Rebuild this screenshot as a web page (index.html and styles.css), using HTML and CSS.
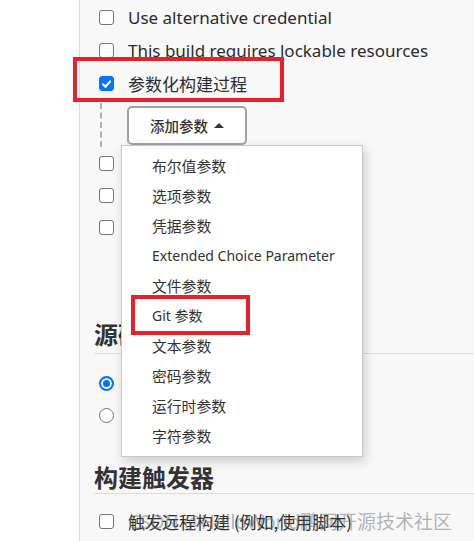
FILE: index.html
```html
<!DOCTYPE html>
<html lang="zh-CN">
<head>
<meta charset="utf-8">
<link rel="stylesheet" href="styles.css">
</head>
<body>
<div class="page">
  <aside class="side"></aside>
  <main class="main">
    <div class="row"><span class="cb"></span><span class="label">Use alternative credential</span></div>
    <div class="row"><span class="cb"></span><span class="label">This build requires lockable resources</span></div>
    <div class="row"><span class="cb checked"><svg viewBox="0 0 14 14" width="14" height="14"><path d="M3.2 7.3 L5.9 10 L10.9 4.2" fill="none" stroke="#fff" stroke-width="2.2" stroke-linecap="round" stroke-linejoin="round"/></svg></span><span class="label cjk">参数化构建过程</span></div>
    <div class="nested">
      <button class="add-btn">添加参数 <span class="caret"></span></button>
    </div>
    <div class="row row-sm"><span class="cb"></span><span class="label cjk">丢弃旧的构建</span></div>
    <div class="row row-sm"><span class="cb"></span><span class="label cjk">在必要的时候并发构建</span></div>
    <div class="row row-sm"><span class="cb"></span><span class="label cjk">限制项目的运行节点</span></div>

    <section class="section sec-scm">
      <h2 class="heading">源码管理</h2>
      <div class="radio-row"><span class="radio checked"></span><span class="label cjk">无</span></div>
      <div class="radio-row"><span class="radio"></span><span class="label">Git</span></div>
    </section>

    <section class="section sec-trig">
      <h2 class="heading">构建触发器</h2>
      <div class="row"><span class="cb"></span><span class="label cjk">触发远程构建 (例如,使用脚本)</span></div>
    </section>

    <ul class="menu">
      <li class="cjk">布尔值参数</li>
      <li class="cjk">选项参数</li>
      <li class="cjk">凭据参数</li>
      <li>Extended Choice Parameter</li>
      <li class="cjk">文件参数</li>
      <li>Git 参数</li>
      <li class="cjk">文本参数</li>
      <li class="cjk">密码参数</li>
      <li class="cjk">运行时参数</li>
      <li class="cjk">字符参数</li>
    </ul>
  </main>
  <div class="mark mark-top"></div>
  <div class="mark mark-git"></div>
  <div class="watermark">CSDN @HelloWorld鹏网开源技术社区</div>
</div>
</body>
</html>
```

FILE: styles.css
```css
* { box-sizing: border-box; }
html, body { margin: 0; padding: 0; }
body {
  width: 474px;
  height: 541px;
  overflow: hidden;
  background: #fff;
  font-family: "Noto Sans", "Noto Sans CJK SC", sans-serif;
  color: #333;
}
.page { display: flex; height: 541px; position: relative; }
.side { width: 80px; flex: none; background: #fff; border-right: 1px solid #dcdcdc; }
.main {
  flex: 1;
  position: relative;
  background: #f8f8f8;
  padding-left: 14px;
  overflow: hidden;
}
.row {
  display: flex;
  align-items: center;
  gap: 14px;
  height: 33px;
  padding-left: 5px;
}
.row:first-child { margin-top: 1px; }
.label { font-size: 17px; white-space: nowrap; color: #2b2b2b; }
.cjk { font-family: "Noto Sans CJK SC", sans-serif; }
.cb {
  width: 15px; height: 15px; flex: none;
  border: 1px solid #767676;
  border-radius: 3px;
  background: #fff;
  display: flex; align-items: center; justify-content: center;
}
.cb.checked { background: #0075ff; border-color: #0075ff; }
.cb.checked svg { display: block; }
.nested {
  margin-left: 6px;
  border-left: 2px dashed #b0b0b0;
  padding: 3px 0 0 25px;
  height: 44px;
  margin-top: 3px;
}
.add-btn {
  width: 120px; height: 39px;
  border: 2px solid #9ca5ae;
  border-radius: 5px;
  background: #fff;
  font-family: "Noto Sans CJK SC", sans-serif;
  font-size: 14.5px;
  font-weight: 500;
  color: #333;
  display: flex; align-items: center; justify-content: center; gap: 6px;
  padding: 0;
}
.caret {
  width: 0; height: 0;
  border-left: 5px solid transparent;
  border-right: 5px solid transparent;
  border-bottom: 5px solid #333;
}
.row-sm { height: 32px; }
.section { margin-top: 0; }
.sec-scm { padding-top: 75px; }
.heading {
  margin: 0;
  font-family: "Noto Sans CJK SC", sans-serif;
  font-size: 24px;
  font-weight: 700;
  color: #333;
  line-height: 32px;
  padding-bottom: 3px;
  border-bottom: 1px solid #ddd;
  margin-bottom: 13px;
}
.radio-row { display: flex; align-items: center; gap: 14px; height: 32px; padding-left: 5px; }
.radio {
  width: 15px; height: 15px; flex: none;
  border: 1px solid #767676; border-radius: 50%; background: #fff;
}
.radio.checked { border: 2px solid #0075ff; box-shadow: inset 0 0 0 2px #fff; background: #0075ff; }
.sec-trig { padding-top: 30px; }
.sec-trig .heading { padding-bottom: 0; margin-bottom: 11px; }

.menu {
  position: absolute;
  left: 41px; top: 145px;
  width: 242px;
  margin: 0; padding: 5px 0;
  list-style: none;
  background: #fff;
  border: 1px solid #c8c8c8;
  box-shadow: 2px 4px 10px rgba(0,0,0,0.18);
}
.menu li {
  height: 30px; line-height: 30px;
  padding-left: 30px;
  font-size: 14px;
  color: #333;
  white-space: nowrap;
}
.menu li.cjk { font-size: 14.8px; }
.mark { position: absolute; border: 4px solid #e8202a; }
.mark-top { left: 73px; top: 57px; width: 211px; height: 45px; }
.mark-git { left: 131px; top: 295px; width: 119px; height: 40px; }
.watermark {
  position: absolute; left: 128px; top: 507px;
  font-family: "Noto Sans", "Noto Sans CJK SC", sans-serif;
  font-size: 19px; color: rgba(110,110,110,0.5);
  white-space: nowrap;
}
```
